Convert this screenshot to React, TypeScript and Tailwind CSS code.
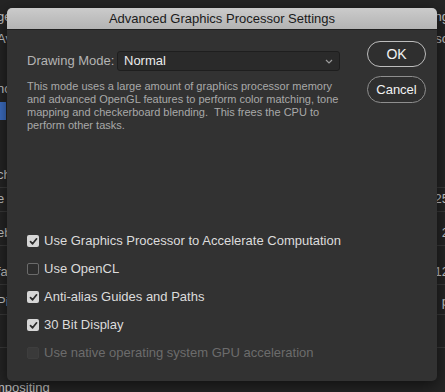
const options = [
  { label: "Use Graphics Processor to Accelerate Computation", checked: true },
  { label: "Use OpenCL", checked: false },
  { label: "Anti-alias Guides and Paths", checked: true },
  { label: "30 Bit Display", checked: true },
  { label: "Use native operating system GPU acceleration", checked: false, disabled: true },
];

// rows of the preferences window peeking out behind the dialog
const backdrop = [
  { h: 29, left: "ge", right: "ng", line: false },
  { h: 22, left: "Av", right: "so", line: false },
  { h: 28, left: "", right: "", line: false },
  { h: 22, left: "nc", right: "", line: false },
  { h: 22, left: "", right: "", line: false, blue: true },
  { h: 65, left: "ch", right: "", line: true },
  { h: 24, left: "e", right: "25", line: true },
  { h: 34, left: "eb", right: "2", line: true },
  { h: 39, left: "fa", right: "12", line: true },
  { h: 30, left: "Pi", right: "p", line: true },
  { h: 33, left: "", right: "", line: true },
];

function Check({ checked, disabled }: { checked: boolean; disabled?: boolean }) {
  if (disabled) {
    return <span className="h-[12px] w-[12px] rounded-[2px] bg-[#3a3a3a] border border-[#3e3e3e]" />;
  }
  if (!checked) {
    return <span className="h-[12px] w-[12px] rounded-[2px] border border-[#6b6b6b] bg-[#2e2e2e]" />;
  }
  return (
    <span className="flex h-[12px] w-[12px] items-center justify-center rounded-[2px] bg-[#d6d6d6]">
      <svg width="9" height="9" viewBox="0 0 9 9">
        <path d="M1.5 4.6 L3.6 6.8 L7.6 1.8" fill="none" stroke="#2b2b2b" strokeWidth="1.7" strokeLinecap="round" strokeLinejoin="round" />
      </svg>
    </span>
  );
}

export default function App() {
  return (
    <div
      className="relative h-[392px] w-[445px] overflow-hidden bg-[#252525] text-[13px]"
      style={{ fontFamily: '"Liberation Sans", Arial, sans-serif' }}
    >
      <div className="flex flex-col text-[#c8c8c8]">
        {backdrop.map((r, i) => (
          <div
            key={i}
            className={`flex items-end justify-between pb-[3px] ${r.line ? "border-b border-[#3a3a3a]" : ""}`}
            style={{ height: r.h }}
          >
            {r.blue ? (
              <span className="h-[18px] w-[6px] bg-[#3d6fc4]" />
            ) : (
              <span className="-ml-[3px]">{r.left}</span>
            )}
            <span className="-mr-[4px]">{r.right}</span>
          </div>
        ))}
        <div className="mt-[30px] -ml-[6px]">mpositing</div>
      </div>

      <div className="absolute left-[7px] top-[8px] flex h-[373px] w-[430px] flex-col overflow-hidden rounded-[5px] bg-[#323232] shadow-[0_4px_16px_rgba(0,0,0,0.6)]">
        <div className="flex h-[22px] items-center justify-center border-b border-[#1f1f1f] bg-gradient-to-b from-[#cbcbcb] to-[#b3b3b3] text-[13px] text-[#1a1a1a]">
          Advanced Graphics Processor Settings
        </div>

        <div className="flex flex-1">
          <div className="flex flex-1 flex-col pl-[20px] pt-[21px]">
            <div className="flex items-center">
              <span className="w-[90px] text-[#b4b4b4]">Drawing Mode:</span>
              <div className="flex h-[20px] w-[223px] items-center justify-between rounded-[3px] border border-[#1e1e1e] bg-[#2a2a2a] pl-[6px] pr-[6px] text-[#ececec]">
                <span>Normal</span>
                <svg width="8" height="5" viewBox="0 0 8 5">
                  <path d="M1 1 L4 4 L7 1" fill="none" stroke="#9a9a9a" strokeWidth="1.2" />
                </svg>
              </div>
            </div>

            <p className="mt-[9px] whitespace-nowrap text-[11px] leading-[13px] text-[#a9a9a9]">
              This mode uses a large amount of graphics processor memory
              <br />
              and advanced OpenGL features to perform color matching, tone
              <br />
              mapping and checkerboard blending.&nbsp; This frees the CPU to
              <br />
              perform other tasks.
            </p>

            <div className="mt-[95px] flex flex-col">
              {options.map((o) => (
                <div key={o.label} className="flex h-[28px] items-center gap-[5px]">
                  <Check checked={o.checked} disabled={o.disabled} />
                  <span className={o.disabled ? "text-[#6c6c6c]" : "text-[#dcdcdc]"}>{o.label}</span>
                </div>
              ))}
            </div>
          </div>

          <div className="flex flex-col gap-[9px] pr-[11px] pt-[11px]">
            <button className="h-[26px] w-[59px] rounded-full border-[1.5px] border-[#bdbdbd] bg-[#2f2f2f] text-[14px] text-[#f2f2f2]">
              OK
            </button>
            <button className="h-[27px] w-[59px] rounded-full border-[1.5px] border-[#8e8e8e] bg-[#2f2f2f] text-[13px] text-[#f2f2f2]">
              Cancel
            </button>
          </div>
        </div>
      </div>
    </div>
  );
}
